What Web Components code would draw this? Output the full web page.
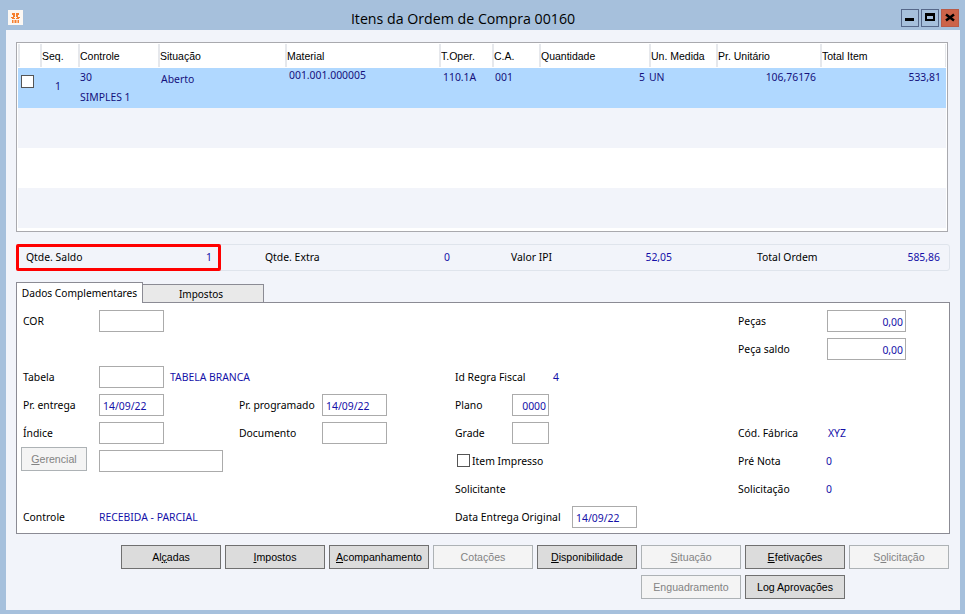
<!DOCTYPE html>
<html>
<head>
<meta charset="utf-8">
<title>Itens da Ordem de Compra</title>
<style>
    html, body { margin: 0; padding: 0; height: 100%; }
    body { font-family: "Noto Sans", "Open Sans", sans-serif; font-size: 10.4px; background: #a6c0dc; overflow: hidden; }
</style>
</head>
<body>
<erp-window caption="Itens da Ordem de Compra 00160">
    <erp-grid></erp-grid>
    <erp-summary></erp-summary>
    <erp-tabs></erp-tabs>
    <erp-actions></erp-actions>
</erp-window>

<script>
// Window frame
class ErpWindow extends HTMLElement {
    constructor() {
        super();
        const shadow = this.attachShadow({mode: "open"});
        shadow.innerHTML = `
            <style>
                :host {
                    display: flex;
                    flex-direction: column;
                    width: 965px;
                    height: 614px;
                    box-sizing: border-box;
                    padding: 0 5px 4px 6px;
                }
                .bar {
                    height: 30px;
                    flex: none;
                    position: relative;
                    display: flex;
                    align-items: center;
                    justify-content: center;
                    padding-right: 40px;
                    box-sizing: border-box;
                }
                .title {
                    font-size: 14.2px;
                    color: #000;
                    font-family: "Open Sans", sans-serif;
                    padding-top: 6px;
                }
                .icon {
                    position: absolute;
                    left: 2px;
                    top: 10px;
                    width: 15px;
                    height: 15px;
                    background: #fbf7f3;
                }
                .btns {
                    position: absolute;
                    right: 1px;
                    top: 9px;
                    display: flex;
                    gap: 2px;
                }
                .btn {
                    box-sizing: border-box;
                    width: 18px;
                    height: 18px;
                    border: 1px solid #56688a;
                }
                .btn svg { display: block; }
                .btn.close { background: #cc6349; border-color: #b95a48; }
                .client {
                    flex: 1;
                    background: #f2f4fa;
                    display: flex;
                    flex-direction: column;
                    padding: 12px 0 0 10px;
                }
            </style>
            <div class="bar">
                <svg class="icon" viewBox="0 0 15 15">
                    <path fill="#f67f2e" d="M4 3h3v2H4zM8 3h3v2H8zM5 5h2v2H5zM8 5h2v2H8zM3 7h3v1H3zM9 7h3v1H9zM4 8h3v1H4zM8 8h3v1H8zM4 10h1.500v3H4zM6.500 10h2v3h-2zM9.500 10h1.500v3H9.500z"/>
                </svg>
                <div class="title"></div>
                <div class="btns">
                    <div class="btn"><svg width="16" height="16"><rect x="3" y="8" width="9" height="3"/></svg></div>
                    <div class="btn"><svg width="16" height="16"><path d="M3 3h10v8H3z M5 6v3h6V6z" fill-rule="evenodd"/></svg></div>
                    <div class="btn close"><svg width="16" height="16"><path d="M4 4.500 L12 10.500 M12 4.500 L4 10.500" stroke="#000" stroke-width="2.500" fill="none"/></svg></div>
                </div>
            </div>
            <div class="client"><slot></slot></div>
        `;
        shadow.querySelector(".title").textContent = this.getAttribute("caption") || "";
    }
}
customElements.define("erp-window", ErpWindow);


// Grid
const COLUMNS = [
    ["", 22], ["Seq.", 38], ["Controle", 80], ["Situação", 127], ["Material", 154], ["T.Oper.", 53],
    ["C.A.", 47], ["Quantidade", 110], ["Un. Medida", 67], ["Pr. Unitário", 104], ["Total Item", 125]
];

class ErpGrid extends HTMLElement {
    constructor() {
        super();
        const shadow = this.attachShadow({mode: "open"});
        const cols = COLUMNS.map(c => c[1] + "px").join(" ");
        shadow.innerHTML = `
            <style>
                :host {
                    display: block;
                    width: 932px;
                    height: 190px;
                    box-sizing: border-box;
                    border: 1px solid #a9a9ae;
                    padding: 1px;
                    background: #fff;
                }
                .row {
                    display: grid;
                    grid-template-columns: ${cols};
                    height: 40px;
                }
                .head { height: 23px; background: #e4e6ea; margin-bottom: 1px; }
                .head div {
                    background: #fff;
                    border-left: 2px solid #e6e8ec;
                    box-sizing: border-box;
                    padding-top: 1px;
                    line-height: 23px;
                    color: #000;
                    font-family: "Liberation Sans", sans-serif;
                    font-size: 10.5px;
                    white-space: nowrap;
                    overflow: hidden;
                }
                .sel { background: #b0d8ff; color: #14107c; }
                .alt { background: #f2f4fa; }
                .plain { background: #fff; }
                .c { padding-left: 2px; white-space: nowrap; }
                .r { text-align: right; padding-right: 4px; }
                .check {
                    width: 11px;
                    height: 11px;
                    background: #fff;
                    border: 1px solid #555;
                    margin: 7px 0 0 3px;
                }
                .two { display: flex; flex-direction: column; gap: 6px; padding-top: 2px; }
            </style>
            <div class="row head">${COLUMNS.map(c => `<div>${c[0]}</div>`).join("")}</div>
            <div class="row sel">
                <div><div class="check"></div></div>
                <div class="c" style="padding:11px 0 0 15px">1</div>
                <div class="c two"><span>30</span><span>SIMPLES 1</span></div>
                <div class="c" style="padding-top:4px;padding-left:3px">Aberto</div>
                <div class="c" style="padding-left:4px">001.001.000005</div>
                <div class="c" style="padding-left:4px;padding-top:2px">110.1A</div>
                <div class="c" style="padding-left:3px;padding-top:2px">001</div>
                <div class="c r" style="padding-top:2px">5</div>
                <div class="c" style="padding-left:0;padding-top:2px">UN</div>
                <div class="c r" style="padding-top:2px">106,76176</div>
                <div class="c r" style="padding-top:2px">533,81</div>
            </div>
            <div class="row alt"></div>
            <div class="row plain"></div>
            <div class="row alt"></div>
        `;
    }
}
customElements.define("erp-grid", ErpGrid);


// Totals strip
class ErpSummary extends HTMLElement {
    constructor() {
        super();
        const shadow = this.attachShadow({mode: "open"});
        const items = [
            ["Qtde. Saldo", "1", 186],
            ["Qtde. Extra", "0", 185],
            ["Valor IPI", "52,05", 161],
            ["Total Ordem", "585,86", 183]
        ];
        shadow.innerHTML = `
            <style>
                :host {
                    display: block;
                    width: 934px;
                    height: 27px;
                    box-sizing: border-box;
                    margin-top: 12px;
                    border: 1px solid #dfe4ec;
                    border-radius: 3px;
                    position: relative;
                }
                .cells {
                    display: grid;
                    grid-template-columns: 239px 246px 246px 1fr;
                    height: 100%;
                    align-items: center;
                    padding-bottom: 1px;
                    box-sizing: border-box;
                }
                .cell { display: flex; justify-content: space-between; white-space: nowrap; padding-left: 9px; }
                .cell span:last-child { color: #1410a8; }
                .mark {
                    position: absolute;
                    left: -1px;
                    top: -1px;
                    width: 205px;
                    height: 27px;
                    box-sizing: border-box;
                    border: 3px solid #f00;
                    border-radius: 2px;
                }
            </style>
            <div class="cells">
                ${items.map(it => `<div class="cell" style="width:${it[2]}px"><span>${it[0]}</span><span>${it[1]}</span></div>`).join("")}
            </div>
            <div class="mark"></div>
        `;
    }
}
customElements.define("erp-summary", ErpSummary);


// Form bits
class ErpLabel extends HTMLElement {
    constructor() {
        super();
        this.attachShadow({mode: "open"}).innerHTML = `
            <style>
                :host {
                    display: flex;
                    align-items: center;
                    white-space: nowrap;
                    height: 28px;
                    box-sizing: border-box;
                    padding-bottom: 1px;
                    color: #000;
                }
                :host([blue]) { color: #1410a8; }
            </style>
            <slot></slot>
        `;
    }
}
customElements.define("erp-label", ErpLabel);

class ErpField extends HTMLElement {
    constructor() {
        super();
        this.attachShadow({mode: "open"}).innerHTML = `
            <style>
                :host {
                    display: flex;
                    align-items: center;
                    justify-content: flex-start;
                    box-sizing: border-box;
                    width: 65px;
                    height: 22px;
                    margin-top: 3px;
                    padding: 1px 2px 0 3px;
                    background: #fff;
                    border: 1px solid #ababab;
                    color: #1410a8;
                }
                :host([num]) { justify-content: flex-end; width: 79px; }
            </style>
            <slot></slot>
        `;
    }
}
customElements.define("erp-field", ErpField);

class ErpButton extends HTMLElement {
    constructor() {
        super();
        this.attachShadow({mode: "open"}).innerHTML = `
            <style>
                :host {
                    display: flex;
                    align-items: center;
                    justify-content: center;
                    box-sizing: border-box;
                    width: 100px;
                    height: 24px;
                    padding-bottom: 1px;
                    background: #dcdcdc;
                    border: 1px solid #707070;
                    color: #000;
                    font-family: "Liberation Sans", sans-serif;
                    font-size: 10.6px;
                    white-space: nowrap;
                }
                :host([off]) { background: #f4f4f4; border-color: #adb2b5; color: #838383; }
            </style>
            <slot></slot>
        `;
    }
}
customElements.define("erp-button", ErpButton);


// Tabs with the form page
class ErpTabs extends HTMLElement {
    constructor() {
        super();
        const shadow = this.attachShadow({mode: "open"});
        shadow.innerHTML = `
            <style>
                :host {
                    display: block;
                    width: 934px;
                    margin-top: 11px;
                }
                .strip { display: flex; height: 20px; position: relative; z-index: 1; white-space: nowrap; }
                .tab {
                    box-sizing: border-box;
                    display: flex;
                    align-items: center;
                    justify-content: center;
                    border: 1px solid #8b8b94;
                    border-bottom: none;
                }
                .tab.on { width: 127px; height: 21px; background: #fff; padding-bottom: 1px; font-size: 10.2px; }
                .tab.off { width: 121px; height: 18px; margin-top: 2px; padding-right: 4px; background: #e9e9e9; border-left: none; font-size: 10px; }
                .page {
                    box-sizing: border-box;
                    height: 232px;
                    background: #fff;
                    border: 1px solid #8b8b94;
                    padding: 4px 0 0 6px;
                    display: grid;
                    grid-template-columns: 76px 140px 83px 133px 57px 226px 89px 1fr;
                    grid-auto-rows: 28px;
                }
                .check { display: flex; align-items: center; gap: 2px; margin-left: 2px; padding-bottom: 1px; }
            </style>
            <div class="strip">
                <div class="tab on">Dados Complementares</div>
                <div class="tab off">Impostos</div>
            </div>
            <div class="page">
                <erp-label style="grid-area:1/1">COR</erp-label>
                <erp-field style="grid-area:1/2"></erp-field>
                <erp-label style="grid-area:1/7">Peças</erp-label>
                <erp-field num style="grid-area:1/8">0,00</erp-field>

                <erp-label style="grid-area:2/7">Peça saldo</erp-label>
                <erp-field num style="grid-area:2/8">0,00</erp-field>

                <erp-label style="grid-area:3/1">Tabela</erp-label>
                <erp-field style="grid-area:3/2"></erp-field>
                <erp-label blue style="grid-area:3/2;margin-left:71px">TABELA BRANCA</erp-label>
                <erp-label style="grid-area:3/5">Id Regra Fiscal</erp-label>
                <erp-label blue style="grid-area:3/6;margin-left:41px">4</erp-label>

                <erp-label style="grid-area:4/1">Pr. entrega</erp-label>
                <erp-field style="grid-area:4/2">14/09/22</erp-field>
                <erp-label style="grid-area:4/3">Pr. programado</erp-label>
                <erp-field style="grid-area:4/4">14/09/22</erp-field>
                <erp-label style="grid-area:4/5">Plano</erp-label>
                <erp-field style="grid-area:4/6;width:37px;justify-content:flex-end">0000</erp-field>

                <erp-label style="grid-area:5/1">Índice</erp-label>
                <erp-field style="grid-area:5/2"></erp-field>
                <erp-label style="grid-area:5/3">Documento</erp-label>
                <erp-field style="grid-area:5/4"></erp-field>
                <erp-label style="grid-area:5/5">Grade</erp-label>
                <erp-field style="grid-area:5/6;width:37px"></erp-field>
                <erp-label style="grid-area:5/7">Cód. Fábrica</erp-label>
                <erp-label blue style="grid-area:5/8;margin-left:1px">XYZ</erp-label>

                <erp-button off style="grid-area:6/1;margin-left:-2px;width:66px"><span><u>G</u>erencial</span></erp-button>
                <erp-field style="grid-area:6/2;width:124px"></erp-field>
                <div class="check" style="grid-area:6/5/6/7">
                    <svg width="13" height="13"><rect x=".5" y=".5" width="12" height="12" fill="#fff" stroke="#555"/></svg>
                    <span>Item Impresso</span>
                </div>
                <erp-label style="grid-area:6/7">Pré Nota</erp-label>
                <erp-label blue style="grid-area:6/7;margin-left:88px">0</erp-label>

                <erp-label style="grid-area:7/5">Solicitante</erp-label>
                <erp-label style="grid-area:7/7">Solicitação</erp-label>
                <erp-label blue style="grid-area:7/7;margin-left:88px">0</erp-label>

                <erp-label style="grid-area:8/1">Controle</erp-label>
                <erp-label blue style="grid-area:8/2">RECEBIDA - PARCIAL</erp-label>
                <erp-label style="grid-area:8/5">Data Entrega Original</erp-label>
                <erp-field style="grid-area:8/6;margin-left:60px">14/09/22</erp-field>
            </div>
        `;
    }
}
customElements.define("erp-tabs", ErpTabs);


// Bottom buttons
class ErpActions extends HTMLElement {
    constructor() {
        super();
        const shadow = this.attachShadow({mode: "open"});
        shadow.innerHTML = `
            <style>
                :host {
                    display: flex;
                    flex-direction: column;
                    gap: 6px;
                    width: 933px;
                    margin-top: 11px;
                }
                .line { display: flex; justify-content: flex-end; gap: 4px; }
                .line.low { padding-right: 104px; }
            </style>
            <div class="line">
                <erp-button><span>Al<u>ç</u>adas</span></erp-button>
                <erp-button><span><u>I</u>mpostos</span></erp-button>
                <erp-button><span><u>A</u>companhamento</span></erp-button>
                <erp-button off><span>Cotações</span></erp-button>
                <erp-button><span><u>D</u>isponibilidade</span></erp-button>
                <erp-button off><span><u>S</u>ituação</span></erp-button>
                <erp-button><span><u>E</u>fetivações</span></erp-button>
                <erp-button off><span>S<u>o</u>licitação</span></erp-button>
            </div>
            <div class="line low">
                <erp-button off><span>Enguadramento</span></erp-button>
                <erp-button><span>Log Aprovações</span></erp-button>
            </div>
        `;
    }
}
customElements.define("erp-actions", ErpActions);
</script>
</body>
</html>
